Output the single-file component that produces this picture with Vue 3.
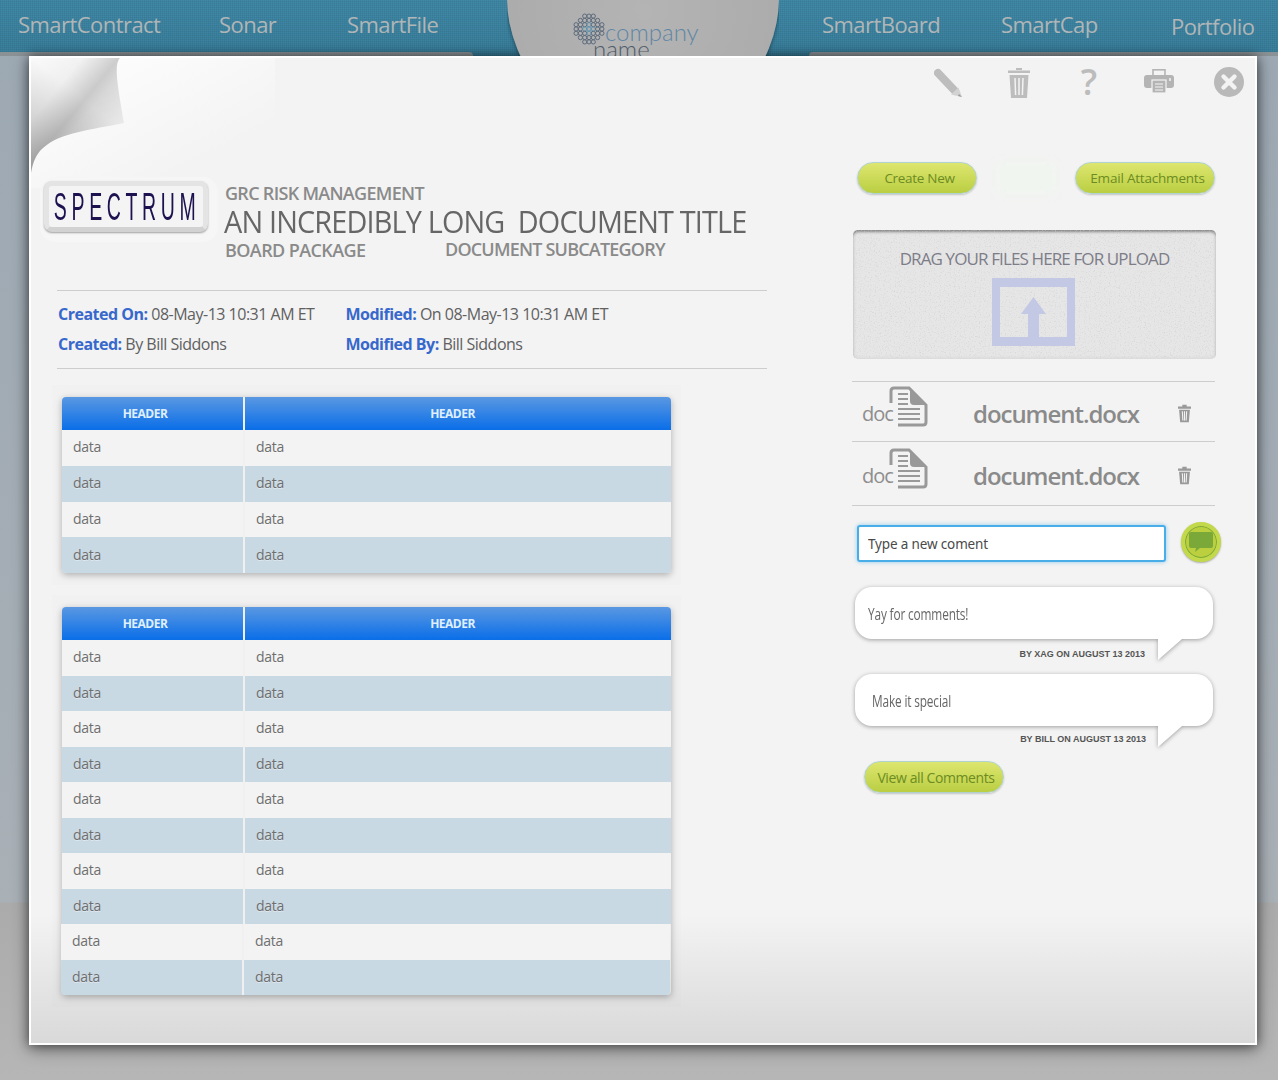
<template>
  <div class="page">
    <nav class="nav">
      <div class="nav__group nav__group--left">
        <a v-for="item in leftNav" :key="item" class="nav__link">{{ item }}</a>
      </div>
      <div class="dome">
        <div class="dome__circle">
          <div class="brandmark">
            <svg class="brandmark__icon" width="32" height="32" viewBox="-16 -16 32 32">
              <circle
                v-for="(c, i) in markDots"
                :key="i"
                :class="{ 'brandmark__ring--inner': c.inner }"
                :cx="c.x"
                :cy="c.y"
                r="2.1"
              />
            </svg>
            <div class="brandmark__words">
              <span class="brandmark__company">company</span>
              <span class="brandmark__name">name</span>
            </div>
          </div>
        </div>
      </div>
      <div class="nav__group nav__group--right">
        <a class="nav__link">SmartBoard</a>
        <a class="nav__link">SmartCap</a>
        <a class="nav__link nav__link--low">Portfolio</a>
      </div>
    </nav>

    <main class="panel">
      <svg class="curl" width="244" height="130" viewBox="0 0 244 130">
        <defs>
          <linearGradient id="flapShade" gradientUnits="userSpaceOnUse" x1="0" y1="0" x2="87" y2="72">
            <stop offset="0" stop-color="#ffffff" />
            <stop offset="0.35" stop-color="#f4f4f4" />
            <stop offset="0.6" stop-color="#cdcdcd" />
            <stop offset="0.7" stop-color="#dadada" />
            <stop offset="1" stop-color="#eeeeee" />
          </linearGradient>
          <linearGradient id="flapDark" gradientUnits="userSpaceOnUse" x1="89" y1="0" x2="1" y2="107">
            <stop offset="0" stop-color="#000" stop-opacity="0" />
            <stop offset="0.4" stop-color="#000" stop-opacity="0.02" />
            <stop offset="1" stop-color="#000" stop-opacity="0.22" />
          </linearGradient>
          <linearGradient id="sheetShade" x1="0" y1="0" x2="1" y2="1">
            <stop offset="0" stop-color="#ffffff" />
            <stop offset="0.75" stop-color="#f3f3f3" />
          </linearGradient>
        </defs>
        <rect width="244" height="130" fill="url(#sheetShade)" />
        <path d="M0 0 H89 C83 6 86 25 93 65 C60 72 30 74 12 90 C5 96 2 104 0 115 Z" fill="url(#flapShade)" />
        <path d="M0 0 H89 C83 6 86 25 93 65 C60 72 30 74 12 90 C5 96 2 104 0 115 Z" fill="url(#flapDark)" />
      </svg>

      <div class="toolbar">
        <button class="tool" aria-label="Edit">
          <svg width="30" height="30" viewBox="0 0 30 30">
            <path d="M4 5 L21 23" stroke="#bdbdbd" stroke-width="8" stroke-linecap="round" />
            <path d="M17 26.5 L24.5 19.5 L28 29 Z" fill="#d2d2d2" />
            <path d="M25 26 L28 29 L24 28 Z" fill="#9a9a9a" />
          </svg>
        </button>
        <button class="tool" aria-label="Delete">
          <svg width="22" height="30" viewBox="0 0 22 30">
            <path d="M8 0 H14 V2 H8 Z M0 2.5 H22 V5 H0 Z" fill="#bdbdbd" />
            <path d="M1.5 7 H20.5 L19 30 H3 Z" fill="#bdbdbd" />
            <path d="M7 10 L7.6 27 M11 10 V27 M15 10 L14.4 27" stroke="#f3f3f3" stroke-width="1.5" />
          </svg>
        </button>
        <span class="tool tool--text">?</span>
        <button class="tool tool--print" aria-label="Print">
          <svg width="30" height="24" viewBox="0 0 30 24">
            <rect x="9" y="0.8" width="12" height="7" fill="#f3f3f3" stroke="#b4b4b4" stroke-width="1.6" />
            <rect x="0" y="6" width="30" height="13" rx="3" fill="#b4b4b4" />
            <rect x="25" y="9" width="2" height="3" fill="#e4e4e4" />
            <rect x="8" y="11" width="14" height="13" fill="#b4b4b4" stroke="#f3f3f3" stroke-width="1.2" />
            <path d="M11 15 H19 M11 18 H19 M11 21 H19" stroke="#f3f3f3" stroke-width="1.1" />
          </svg>
        </button>
        <button class="tool tool--close" aria-label="Close">
          <svg width="30" height="30" viewBox="0 0 30 30">
            <circle cx="15" cy="15" r="15" fill="#b9b9b9" />
            <path d="M9.5 9.5 L20.5 20.5 M20.5 9.5 L9.5 20.5" stroke="#f3f3f3" stroke-width="4.4" stroke-linecap="round" />
          </svg>
        </button>
      </div>

      <div class="columns">
        <section class="doc">
          <header class="brand">
            <div class="logo"><span class="logo__text">SPECTRUM</span></div>
            <div class="brand__text">
              <div class="brand__eyebrow">GRC RISK MANAGEMENT</div>
              <h1 class="brand__title"><span>AN INCREDIBLY LONG&nbsp; DOCUMENT TITLE</span></h1>
              <div class="brand__subs">
                <span class="brand__sub">BOARD PACKAGE</span>
                <span class="brand__sub brand__sub--raised">DOCUMENT SUBCATEGORY</span>
              </div>
            </div>
          </header>

          <div class="meta">
            <div><b>Created On:</b> 08-May-13 10:31 AM ET</div>
            <div><b>Modified:</b> On 08-May-13 10:31 AM ET</div>
            <div><b>Created:</b> By Bill Siddons</div>
            <div><b>Modified By:</b> Bill Siddons</div>
          </div>

          <div class="halo halo--first">
            <div class="grid-table">
              <div class="grid-table__row grid-table__row--head">
                <div class="grid-table__cell">HEADER</div>
                <div class="grid-table__cell">HEADER</div>
              </div>
              <div v-for="n in 4" :key="n" :class="['grid-table__row', { 'grid-table__row--alt': n % 2 === 0 }]">
                <div class="grid-table__cell">data</div>
                <div class="grid-table__cell">data</div>
              </div>
            </div>
          </div>

          <div class="halo">
            <div class="grid-table grid-table--long">
              <div class="grid-table__row grid-table__row--head">
                <div class="grid-table__cell">HEADER</div>
                <div class="grid-table__cell">HEADER</div>
              </div>
              <div
                v-for="n in 10"
                :key="n"
                :class="['grid-table__row', { 'grid-table__row--alt': n % 2 === 0, 'grid-table__row--shift': n > 8 }]"
              >
                <div class="grid-table__cell">data</div>
                <div class="grid-table__cell">data</div>
              </div>
            </div>
          </div>
        </section>

        <aside class="side">
          <div class="side__actions">
            <button class="pill pill--create">Create New</button>
            <span class="side__ghost"></span>
            <button class="pill pill--email">Email Attachments</button>
          </div>

          <div class="dropzone">
            <svg class="dropzone__noise" width="100%" height="100%">
              <filter id="grain">
                <feTurbulence type="fractalNoise" baseFrequency="0.8" numOctaves="2" seed="4" />
                <feColorMatrix values="0 0 0 0 0.62  0 0 0 0 0.62  0 0 0 0 0.62  2 0 0 0 -1.05" />
              </filter>
              <rect width="100%" height="100%" filter="url(#grain)" />
            </svg>
            <div class="dropzone__label">DRAG YOUR FILES HERE FOR UPLOAD</div>
            <svg class="dropzone__icon" width="83" height="68" viewBox="0 0 83 68">
              <path d="M0 0 H83 V68 H0 Z M8 9 V59 H36 V36 H29 L41.5 19 L54 36 H47 V59 H75 V9 Z" fill="#c3c8e4" fill-rule="evenodd" />
            </svg>
          </div>

          <div class="files">
            <div v-for="n in 2" :key="n" :class="['file', { 'file--last': n === 2 }]">
              <div class="file__type">
                <span class="file__ext">doc</span>
                <svg width="40" height="41" viewBox="0 0 40 41">
                  <path d="M2 17 V5 Q2 2 5 2 H20 L37 19 V36 Q37 39 34 39 H9" fill="none" stroke="#999" stroke-width="3" />
                  <path d="M21 2 L37 19 H25 Q21 19 21 15 Z" fill="#999" />
                  <path d="M9 8 H19 M9 13 H19 M9 18 H19 M9 23 H31 M9 28 H31 M9 33 H31" stroke="#999" stroke-width="2" />
                </svg>
              </div>
              <span class="file__name">document.docx</span>
              <svg class="file__trash" width="13" height="19" viewBox="0 0 24 32">
                <path d="M8 0 H16 V3 H8 Z M0 3 H24 V7 H0 Z" fill="#999" />
                <path d="M2 9 H22 L20 32 H4 Z" fill="#999" />
                <path d="M8 12 L9 29 M12 12 V29 M16 12 L15 29" stroke="#f3f3f3" stroke-width="2" />
              </svg>
            </div>
          </div>

          <div class="composer">
            <input class="composer__input" type="text" value="Type a new coment" />
            <button class="composer__send" aria-label="Send">
              <svg width="24" height="20" viewBox="0 0 24 20">
                <path d="M2 0 H22 Q24 0 24 2 V14 Q24 16 22 16 H11 L6 20 L7 16 H2 Q0 16 0 14 V2 Q0 0 2 0 Z" fill="#7aa93a" />
              </svg>
            </button>
          </div>

          <article v-for="c in comments" :key="c.text" :class="['comment', c.mod]">
            <div class="comment__bubble">
              <p class="comment__text"><span>{{ c.text }}</span></p>
              <span class="comment__tail"></span>
            </div>
            <div class="comment__by">{{ c.by }}</div>
          </article>

          <button class="pill pill--all">View all Comments</button>
        </aside>
      </div>
    </main>
  </div>
</template>

<script setup>
const leftNav = ['SmartContract', 'Sonar', 'SmartFile']

const comments = [
  { text: 'Yay for comments!', by: 'BY XAG ON AUGUST 13 2013', mod: 'comment--first' },
  { text: 'Make it special', by: 'BY BILL ON AUGUST 13 2013', mod: 'comment--second' }
]

// lattice of little rings for the company mark
const markDots = []
for (let i = -3; i <= 3; i++) {
  for (let j = -3; j <= 3; j++) {
    const dist = Math.abs(i) + Math.abs(j)
    if (dist <= 4) markDots.push({ x: i * 4.3, y: j * 4.3, inner: dist <= 1 })
  }
}
</script>

<style>
html, body {
  margin: 0;
  background: #a3a8ad;
}
</style>

<style scoped>
.page {
  width: 1278px;
  height: 1080px;
  overflow: hidden;
  font-family: "Open Sans", "Noto Sans", sans-serif;
  background: linear-gradient(180deg, #9ca8b3 0, #a9b0b6 902px, #ababab 903px, #b6b6b6 100%);
}

.nav {
  position: relative;
  display: flex;
  height: 56px;
  background:
    repeating-linear-gradient(0deg, rgba(0, 0, 0, 0.05) 0 1px, transparent 1px 2px),
    repeating-linear-gradient(90deg, rgba(0, 0, 0, 0.05) 0 1px, transparent 1px 2px),
    linear-gradient(180deg, #408aa8 0%, #3a809d 100%);
}

.nav::before,
.nav::after {
  content: "";
  position: absolute;
  bottom: 0;
  height: 4px;
  background: #8b9296;
}

.nav::before {
  left: 0;
  width: 473px;
  border-top-right-radius: 4px;
}

.nav::after {
  left: 809px;
  right: 0;
  border-top-left-radius: 4px;
}

.nav__group {
  display: grid;
  align-items: start;
  height: 56px;
  padding-top: 8px;
  box-sizing: border-box;
}

.nav__group--left {
  width: 507px;
  padding-left: 18px;
  grid-template-columns: 201px 128px 160px;
}

.nav__group--right {
  width: 499px;
  padding-left: 43px;
  grid-template-columns: 179px 170px auto;
}

.nav__link {
  font-size: 22px;
  line-height: 32px;
  letter-spacing: -0.55px;
  color: #b0b5b7;
}

.nav__link--low {
  margin-top: 2px;
}

.dome {
  position: relative;
  z-index: 1;
  width: 272px;
  height: 56px;
  overflow: hidden;
}

.dome__circle {
  width: 272px;
  height: 272px;
  margin-top: -139px;
  padding-top: 152px;
  box-sizing: border-box;
  border-radius: 50%;
  background: radial-gradient(circle at 50% 55%, #b4b4b4 0%, #aaaaaa 82%, #b4b4b4 93%, #a0a0a0 98%, #888c8e 100%);
  box-shadow: 0 0 4px rgba(0, 0, 0, 0.5);
}

.brandmark {
  display: flex;
  margin-left: 66px;
}

.brandmark__icon circle {
  fill: none;
  stroke: #5d6b7c;
  stroke-width: 1;
}

.brandmark__icon circle.brandmark__ring--inner {
  stroke: #5f94b0;
}

.brandmark__words {
  display: flex;
  flex-direction: column;
  margin-left: -12px;
  margin-top: 10px;
  font-family: Lato, "Open Sans", sans-serif;
  font-weight: 300;
  font-size: 24px;
  line-height: 17px;
}

.brandmark__company {
  margin-left: 12px;
  color: #5f86a4;
}

.brandmark__name {
  color: #4f5c6b;
}

.panel {
  position: relative;
  width: 1228px;
  height: 989px;
  margin-left: 29px;
  box-sizing: border-box;
  border: 2px solid #fff;
  background: linear-gradient(180deg, #f3f3f3 0%, #f3f3f3 87%, #d9d9d9 100%);
  box-shadow: 0 0 10px rgba(0, 0, 0, 0.45), 0 4px 16px rgba(0, 0, 0, 0.4);
}

.curl {
  position: absolute;
  left: 0;
  top: 0;
}

.toolbar {
  position: relative;
  display: flex;
  justify-content: flex-end;
  gap: 40px;
  height: 104px;
  padding: 10px 11px 0 0;
  box-sizing: border-box;
}

.tool {
  display: flex;
  justify-content: center;
  align-items: flex-start;
  width: 30px;
  height: 32px;
  padding: 0;
  border: 0;
  background: none;
}

.tool--text {
  font-size: 36px;
  font-weight: 600;
  line-height: 28px;
  color: #bcbcbc;
}

.tool--print {
  margin-top: 1px;
}

.tool--close {
  margin-top: -1px;
}

.columns {
  position: relative;
  display: flex;
}

.doc {
  width: 821px;
  padding-top: 19px;
  box-sizing: border-box;
}

.brand {
  display: flex;
  gap: 16px;
  height: 109px;
  margin-left: 13px;
}

.logo {
  display: flex;
  justify-content: center;
  align-items: center;
  width: 164px;
  height: 51px;
  box-sizing: border-box;
  border-radius: 8px;
  border: 5px solid #e4e4e4;
  border-bottom-color: #d2d2d2;
  background: #f4f4f4;
  box-shadow: 0 1px 2px rgba(0, 0, 0, 0.35), 3px 3px 0 7px #f6f6f6;
}

.logo__text {
  display: inline-block;
  padding-left: 6px;
  font-family: "Liberation Sans", sans-serif;
  font-size: 39px;
  line-height: 39px;
  letter-spacing: 9.3px;
  color: #1d1150;
  transform: scaleX(0.5);
  white-space: nowrap;
}

.brand__text {
  color: #8a8a8a;
  margin-left: 1px;
}

.brand__eyebrow {
  font-size: 18px;
  font-weight: 600;
  line-height: 24px;
  letter-spacing: -0.7px;
}

.brand__title {
  margin: 0 0 0 -1px;
  font-size: 31px;
  font-weight: 400;
  line-height: 33px;
  letter-spacing: -0.9px;
  color: #666;
  white-space: nowrap;
}

.brand__title span {
  display: inline-block;
  transform: scaleX(0.93);
  transform-origin: left center;
}

.brand__subs {
  display: flex;
  font-size: 18px;
  font-weight: 600;
  line-height: 24px;
  letter-spacing: -0.6px;
  white-space: nowrap;
}

.brand__sub {
  width: 220px;
}

.brand__sub--raised {
  margin-top: -1px;
  letter-spacing: -0.8px;
}

.meta {
  display: grid;
  grid-template-columns: 287.5px 1fr;
  grid-auto-rows: 30px;
  align-items: center;
  width: 710px;
  height: 79px;
  margin-left: 26px;
  padding: 8px 0 0 1px;
  box-sizing: border-box;
  border-top: 1px solid #cdcdcd;
  border-bottom: 1px solid #cdcdcd;
  font-size: 16px;
  letter-spacing: -0.5px;
  color: #606060;
}

.meta b {
  font-weight: 700;
  color: #3768cc;
}

.halo {
  width: 629px;
  margin: 10px 0 0 21px;
  padding: 12px 10px 12px;
  box-sizing: border-box;
  background: rgba(0, 0, 0, 0.006);
}

.halo--first {
  margin-top: 16px;
}

.grid-table {
  box-shadow: 0 2px 7px rgba(0, 0, 0, 0.28);
  border-radius: 4px;
  font-size: 14px;
  font-weight: 500;
  letter-spacing: -0.3px;
  color: #6e6e6e;
}

.grid-table__row {
  display: grid;
  grid-template-columns: 181px 1fr;
  height: 35.75px;
  background: #f3f3f3;
}

.grid-table--long .grid-table__row {
  height: 35.5px;
}

.grid-table__row--alt {
  background: #c9d9e4;
}

.grid-table__row--shift {
  margin-left: -1px;
  margin-right: 1px;
}

.grid-table__row--head,
.grid-table--long .grid-table__row--head {
  height: 33px;
  border-radius: 4px 4px 0 0;
  background: linear-gradient(180deg, #5a98e2 0%, #0a6ee8 100%);
  color: #dfefff;
  font-size: 12px;
  font-weight: 700;
  letter-spacing: -0.5px;
}

.grid-table__row:last-child {
  border-radius: 0 0 4px 4px;
}

.grid-table__cell {
  display: flex;
  align-items: center;
  padding: 0 0 2px 11px;
  text-shadow: 0 1px 0 rgba(255, 255, 255, 0.4);
}

.grid-table__cell + .grid-table__cell {
  border-left: 2px solid #f0f0f0;
}

.grid-table__row--head .grid-table__cell {
  justify-content: center;
  padding: 0 15px 0 0;
  text-shadow: none;
}

.grid-table__row--head .grid-table__cell + .grid-table__cell {
  padding-right: 11px;
}

.side {
  width: 364px;
}

.side__actions {
  display: flex;
  justify-content: space-between;
  align-items: center;
  margin-left: 5px;
  width: 358px;
}

.side__ghost {
  width: 60px;
  height: 32px;
  background: #f0f5ef;
  filter: blur(5px);
}

.pill {
  height: 32px;
  padding: 0;
  border: 1px solid #b1d3cf;
  border-radius: 16px;
  background: linear-gradient(180deg, #dde66f 0%, #bace42 100%);
  box-shadow: 0 1px 2px rgba(0, 0, 0, 0.2);
  font-family: inherit;
  font-size: 13.5px;
  letter-spacing: -0.3px;
  color: #6c8c22;
}

.pill--create {
  width: 120px;
  padding-left: 5px;
}

.pill--email {
  width: 140px;
  padding-left: 5px;
  letter-spacing: -0.2px;
}

.pill--all {
  width: 140px;
  margin: 16px 0 0 12px;
  padding-left: 4px;
  font-size: 14px;
  letter-spacing: -0.4px;
}

.dropzone {
  position: relative;
  display: flex;
  flex-direction: column;
  align-items: center;
  width: 363px;
  height: 129px;
  margin: 36px 0 0 1px;
  padding-top: 19px;
  box-sizing: border-box;
  border-radius: 5px;
  background: #e6e6e6;
  box-shadow: inset 0 3px 3px -1px rgba(0, 0, 0, 0.4), inset 0 0 4px rgba(0, 0, 0, 0.1);
  overflow: hidden;
}

.dropzone__noise {
  position: absolute;
  left: 0;
  top: 0;
}

.dropzone__label {
  position: relative;
  font-size: 17px;
  line-height: 20px;
  letter-spacing: -0.88px;
  color: #7d7d89;
}

.dropzone__icon {
  position: relative;
  margin: 9px 2px 0 0;
}

.files {
  width: 363px;
  margin-top: 22px;
}

.file {
  display: flex;
  align-items: center;
  height: 60px;
  border-top: 1px solid #cdcdcd;
  box-sizing: border-box;
}

.file--last {
  height: 65px;
  border-bottom: 1px solid #cdcdcd;
}

.file__type {
  display: flex;
  align-items: flex-end;
  width: 121px;
  margin-bottom: 11px;
  padding-left: 10px;
  box-sizing: border-box;
}

.file__ext {
  width: 27px;
  font-size: 20px;
  font-weight: 500;
  line-height: 26px;
  letter-spacing: -1px;
  color: #8e8e8e;
}

.file__name {
  width: 205px;
  margin-top: 4px;
  font-size: 24px;
  font-weight: 600;
  letter-spacing: -1.04px;
  color: #8a8a8a;
}

.file__trash {
  flex: none;
  margin-top: 4px;
}

.composer {
  display: flex;
  align-items: flex-start;
  gap: 15px;
  height: 37px;
  margin: 19px 0 0 5px;
}

.composer__input {
  flex: none;
  width: 309px;
  height: 37px;
  padding: 0 9px;
  box-sizing: border-box;
  border: 2px solid #49aee8;
  border-radius: 3px;
  background: #fff;
  box-shadow: 0 0 4px rgba(73, 174, 232, 0.6);
  font-family: "Noto Sans", sans-serif;
  font-size: 13.5px;
  letter-spacing: -0.15px;
  color: #4a4a4a;
}

.composer__send {
  flex: none;
  display: flex;
  justify-content: center;
  align-items: center;
  width: 40px;
  height: 40px;
  margin-top: -3px;
  padding: 0;
  border: 4px solid #c3d84a;
  border-radius: 50%;
  background: #bcd03f;
  box-shadow: 0 1px 2px rgba(0, 0, 0, 0.3), inset 0 0 0 1px #7aa93a;
}

.comment {
  position: relative;
  width: 358px;
  margin-left: 3px;
}

.comment--first {
  margin-top: 25px;
}

.comment--second {
  margin-top: 14px;
}

.comment__bubble {
  position: relative;
  height: 52px;
  border-radius: 17px;
  background: #fff;
  filter: drop-shadow(0 1px 2px rgba(0, 0, 0, 0.35));
}

.comment__tail {
  position: absolute;
  left: 303px;
  top: 52px;
  width: 24px;
  height: 21px;
  background: #fff;
  clip-path: polygon(0 0, 100% 0, 0 100%);
}

.comment__text {
  margin: 0;
  padding: 0 13px;
  font-size: 16px;
  line-height: 54px;
  letter-spacing: -0.2px;
  color: #666;
}

.comment__text span {
  display: inline-block;
  transform: scaleX(0.74);
  transform-origin: left center;
  white-space: nowrap;
}

.comment--second .comment__text {
  padding-left: 17px;
}

.comment__by {
  width: 290px;
  margin-top: 10px;
  font-family: "Liberation Sans", sans-serif;
  font-size: 9px;
  font-weight: 700;
  line-height: 11px;
  text-align: right;
  color: #555;
}

.comment--second .comment__by {
  width: 291px;
  margin-top: 8px;
}
</style>
